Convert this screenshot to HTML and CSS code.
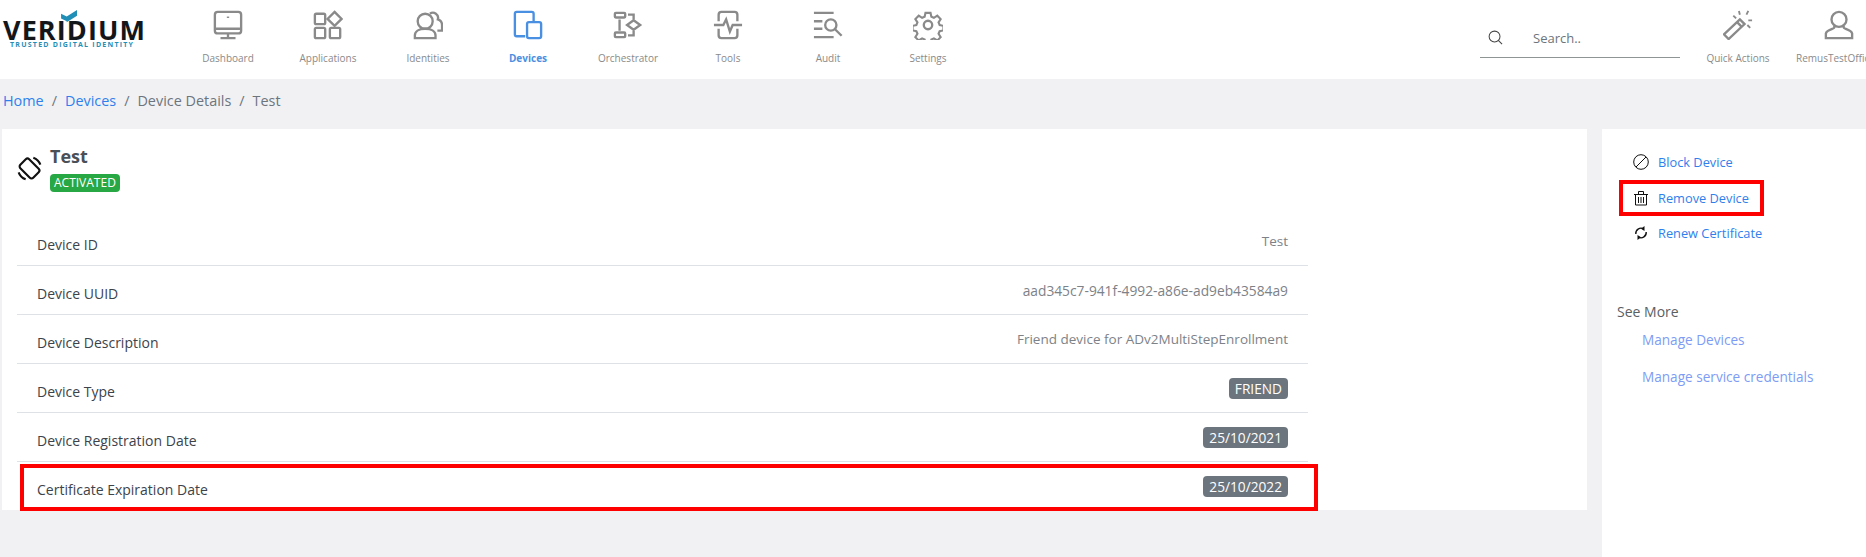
FILE: index.html
```html
<!DOCTYPE html>
<html lang="en">
<head>
<meta charset="utf-8">
<title>Device Details</title>
<link rel="stylesheet" href="styles.css">
</head>
<body>
<header class="topbar">
  <div class="logo">
    <svg class="logo-check" viewBox="0 0 18 16"><path d="M0 4l6 3 0 5-6-3zM6 7l11-7 0 6-11 7z" fill="#1f8fb8"/></svg>
    <div class="logo-name">VERIDIUM</div>
    <div class="logo-tag">TRUSTED DIGITAL IDENTITY</div>
  </div>
  <nav class="nav">
    <a class="nav-item"><svg class="ico" viewBox="0 0 32 32"><rect x="2" y="2" width="28" height="23" rx="3"/><path d="M2 20h28M8 30h16M16 25v5"/><path d="M16 7v1.500"/></svg><span>Dashboard</span></a>
    <a class="nav-item"><svg class="ico" viewBox="0 0 32 32"><rect x="2" y="4" width="11" height="11" rx="1.500"/><path d="M23 2l7.500 7.500-7.500 7.500-7.500-7.500z"/><rect x="2" y="19" width="11" height="11" rx="1.500"/><rect x="18" y="19" width="11" height="11" rx="1.500"/></svg><span>Applications</span></a>
    <a class="nav-item"><svg class="ico" viewBox="0 0 32 32"><circle cx="13" cy="12" r="8"/><path d="M2 30v-3c0-4 4-7 11-7s11 3 11 7v3z"/><path d="M18 4a5.500 5.500 0 0 1 8.500 6c3 1 4.500 3.500 4.500 6v6h-5"/></svg><span>Identities</span></a>
    <a class="nav-item active"><svg class="ico" viewBox="0 0 32 32"><path d="M13 28H4a2 2 0 0 1-2-2V4a2 2 0 0 1 2-2h16a2 2 0 0 1 2 2v8"/><rect x="15" y="13" width="15" height="17" rx="2"/></svg><span>Devices</span></a>
    <a class="nav-item"><svg class="ico" viewBox="0 0 32 32"><rect x="2" y="3" width="11" height="5" rx="1"/><rect x="2" y="24" width="11" height="5" rx="1"/><path d="M7 10v12M16 5h6v5M16 27h6v-5"/><path d="M22 11l7 5-7 5-7-5z"/></svg><span>Orchestrator</span></a>
    <a class="nav-item"><svg class="ico" viewBox="0 0 32 32"><path d="M6 12V5a3 3 0 0 1 3-3h14a3 3 0 0 1 3 3v7M6 20v7a3 3 0 0 0 3 3h14a3 3 0 0 0 3-3v-7"/><path d="M1 16h10l3-6 4 13 3-7h10"/></svg><span>Tools</span></a>
    <a class="nav-item"><svg class="ico" viewBox="0 0 32 32"><path d="M1 3h21M1 12h9M1 20h9M1 29h21"/><circle cx="19" cy="16" r="6"/><path d="M23.500 20.500l7 7"/></svg><span>Audit</span></a>
    <a class="nav-item"><svg class="ico" viewBox="0 0 32 32"><circle cx="16" cy="16" r="4.500"/><path d="M13 2h6l1 4.500 3 1.300 4-2.500 4 4-2.500 4 1.300 3 4.500 1v5.400l-4.500 1-1.300 3 2.500 4-4 4-4-2.500-3 1.300-1 4.500h-6l-1-4.500-3-1.300-4 2.500-4-4 2.500-4-1.300-3-4.500-1v-5.400l4.500-1 1.300-3-2.500-4 4-4 4 2.500 3-1.300z" transform="translate(1.600 1.300) scale(.9)"/></svg><span>Settings</span></a>
  </nav>
  <div class="tools">
    <div class="search">
      <svg class="search-ico" viewBox="0 0 16 16"><circle cx="7" cy="7" r="5.800"/><path d="M11 11l4 4"/></svg>
      <span class="search-text">Search..</span>
    </div>
    <a class="tool-item quick"><svg class="ico" viewBox="0 0 32 32"><path d="M1 26L18 10l5 5L6 31z"/><path d="M15 13l5 5"/><path class="dots" d="M17 1l1 4M27 1l-2 4M31 11h-4M29 19l-3-3M11 6l3 3"/></svg><span>Quick Actions</span></a>
    <a class="tool-item user"><svg class="ico" viewBox="0 0 32 32"><circle cx="16" cy="10" r="8"/><path d="M11 17v2c0 1-8 2-9 6v5h28v-5c-1-4-9-5-9-6v-2"/></svg><span>RemusTestOffice</span></a>
  </div>
</header>

<div class="crumbs"><a>Home</a><i>/</i><a>Devices</a><i>/</i><b>Device Details</b><i>/</i><b>Test</b></div>

<main class="layout">
  <section class="card">
    <div class="title">
      <svg class="title-ico" viewBox="0 0 26 26"><rect x="6.500" y="3.500" width="13" height="19" rx="2.500" transform="rotate(-45 13 13)"/><path d="M17 1.700a12 12 0 0 1 7.300 7.300M9 24.300A12 12 0 0 1 1.700 17"/></svg>
      <div>
        <h1>Test</h1>
        <span class="badge green">ACTIVATED</span>
      </div>
    </div>
    <div class="rows">
      <div class="row"><span class="label">Device ID</span><span class="value">Test</span></div>
      <div class="row"><span class="label">Device UUID</span><span class="value uuid">aad345c7-941f-4992-a86e-ad9eb43584a9</span></div>
      <div class="row"><span class="label">Device Description</span><span class="value">Friend device for ADv2MultiStepEnrollment</span></div>
      <div class="row"><span class="label">Device Type</span><span class="badge grey">FRIEND</span></div>
      <div class="row"><span class="label">Device Registration Date</span><span class="badge grey">25/10/2021</span></div>
      <div class="row last"><span class="label">Certificate Expiration Date</span><span class="badge grey">25/10/2022</span><div class="mark mark-row"></div></div>
    </div>
  </section>
  <aside class="side">
    <ul class="actions">
      <li><svg class="act-ico" viewBox="0 0 16 16"><circle cx="8" cy="8" r="7.300"/><path d="M3 13L13 3"/></svg><a>Block Device</a></li>
      <li><svg class="act-ico" viewBox="0 0 16 16"><path d="M1 4.500h14M5.500 4V1.500h5V4M2.500 4.500V15h11V4.500M5.500 7v6M8 7v6M10.500 7v6"/></svg><a>Remove Device</a><div class="mark mark-act"></div></li>
      <li><svg class="act-ico renew" viewBox="0 0 16 16"><path d="M2.800 9a5.300 5.300 0 0 1 7.700-5.200M13.200 7a5.300 5.300 0 0 1-7.700 5.200"/><path class="fill" d="M11.500 1v5L8 3.800zM4.500 15v-5L8 12.200z"/></svg><a>Renew Certificate</a></li>
    </ul>
    <h2>See More</h2>
    <ul class="more">
      <li><a>Manage Devices</a></li>
      <li><a>Manage service credentials</a></li>
    </ul>
  </aside>
</main>
</body>
</html>
```

FILE: styles.css
```css
* { box-sizing: border-box; }
html, body { margin: 0; height: 100%; }
body {
  background: #f1f1f4;
  font-family: "Open Sans", "Liberation Sans", sans-serif;
  color: #495057;
  overflow: hidden;
  width: 1866px;
  height: 557px;
}
.topbar {
  height: 79px;
  background: #fff;
  display: flex;
  align-items: flex-start;
}
.logo { width: 178px; padding: 20px 0 0 3px; position: relative; }
.logo-check { position: absolute; left: 61px; top: 10px; width: 17px; height: 15px; }
.logo-name {
  font-weight: 700;
  font-size: 27px;
  line-height: 20px;
  letter-spacing: 1.100px;
  color: #14171a;
}
.logo-tag {
  font-size: 7px;
  font-weight: 700;
  line-height: 8px;
  letter-spacing: 1.250px;
  color: #1f8fb8;
  margin: 1px 0 0 7px;
  white-space: nowrap;
}
.nav { display: flex; }
.nav-item, .tool-item {
  display: flex;
  flex-direction: column;
  align-items: center;
  font-size: 10px;
  color: #8a8a8a;
  white-space: nowrap;
  padding-top: 10px;
}
.nav-item { width: 100px; }
.nav-item span, .tool-item span { margin-top: 11px; line-height: 14px; }
.ico { width: 30px; height: 30px; fill: none; stroke: #8a8a8a; stroke-width: 2.500; display: block; }
.active { color: #4a90e2; font-weight: 700; }
.active .ico { stroke: #4a90e2; }
.dots { stroke-width: 2; }
.tools { display: flex; margin-left: auto; align-items: flex-start; }
.search {
  width: 200px;
  height: 58px;
  display: flex;
  align-items: center;
  border-bottom: 1px solid #8f9494;
  padding: 18px 0 0 8px;
  margin-right: 24px;
}
.search-ico { width: 15px; height: 15px; fill: none; stroke: #444; stroke-width: 1.100; }
.search-text { margin-left: 30px; font-size: 13px; color: #6c757d; }
.quick { width: 68px; }
.user { width: 70px; margin-left: 24px; align-items: flex-start; }
.user .ico { margin-left: 28px; }
.crumbs {
  height: 50px;
  padding: 12px 0 0 3px;
  font-size: 14.400px;
  line-height: 20px;
  color: #6c757d;
  display: flex;
}
.crumbs a { color: #2f80ed; }
.crumbs b { font-weight: 400; }
.crumbs i { font-style: normal; margin: 0 8px; }
.layout {
  display: grid;
  grid-template-columns: 1585px 264px;
  column-gap: 15px;
  margin-left: 2px;
  height: 428px;
}
.card { background: #fff; height: 381px; padding: 0 0 0 15px; }
.title { display: flex; padding-top: 15px; height: 88px; }
.title-ico { width: 25px; height: 25px; fill: none; stroke: #111; stroke-width: 2.200; margin: 12px 8px 0 0; }
h1 { margin: 0; font-size: 18px; line-height: 25px; font-weight: 700; color: #495057; }
.badge { display: inline-block; border-radius: 4px; color: #fff; font-size: 12px; line-height: 21px; padding: 0 6px; }
.green { display: block; width: fit-content; margin-top: 5px; background: #28a745; font-size: 12px; line-height: 18px; padding: 0 4px; }
.grey { background: #6c757d; font-size: 13.700px; }
.rows { width: 1291px; }
.row {
  height: 49px;
  border-bottom: 1px solid #dee2e6;
  display: flex;
  align-items: center;
  justify-content: space-between;
  padding: 0 20px;
  position: relative;
}
.row.last { border-bottom: 0; }
.label { font-size: 14px; color: #3c434a; padding-top: 6px; }
.value { font-size: 13.500px; color: #7d8288; }
.uuid { font-size: 13.770px; }
.mark { position: absolute; border: 4px solid #f00; pointer-events: none; }
.mark-row { left: 3px; right: -10px; top: 2px; height: 47px; }
.side { background: #fff; padding: 15.500px 0 0 15px; }
ul { list-style: none; margin: 0; padding: 0; }
.actions li { display: flex; align-items: center; height: 35.500px; position: relative; padding-left: 16px; font-size: 12.800px; color: #2f80ed; }
.act-ico { width: 16px; height: 16px; fill: none; stroke: #111; stroke-width: 1; margin-right: 9px; }
.act-ico .fill { fill: #111; stroke: none; }
.renew { stroke-width: 1.400; }
.mark-act { left: 2px; width: 145px; top: 0; height: 36px; }
h2 { margin: 51px 0 0; font-size: 14px; line-height: 20px; font-weight: 400; color: #5a5f64; }
.more { margin-top: 8px; padding-left: 25px; }
.more li { font-size: 13.600px; line-height: 20px; margin-bottom: 17px; color: #7d9cf5; }
```
